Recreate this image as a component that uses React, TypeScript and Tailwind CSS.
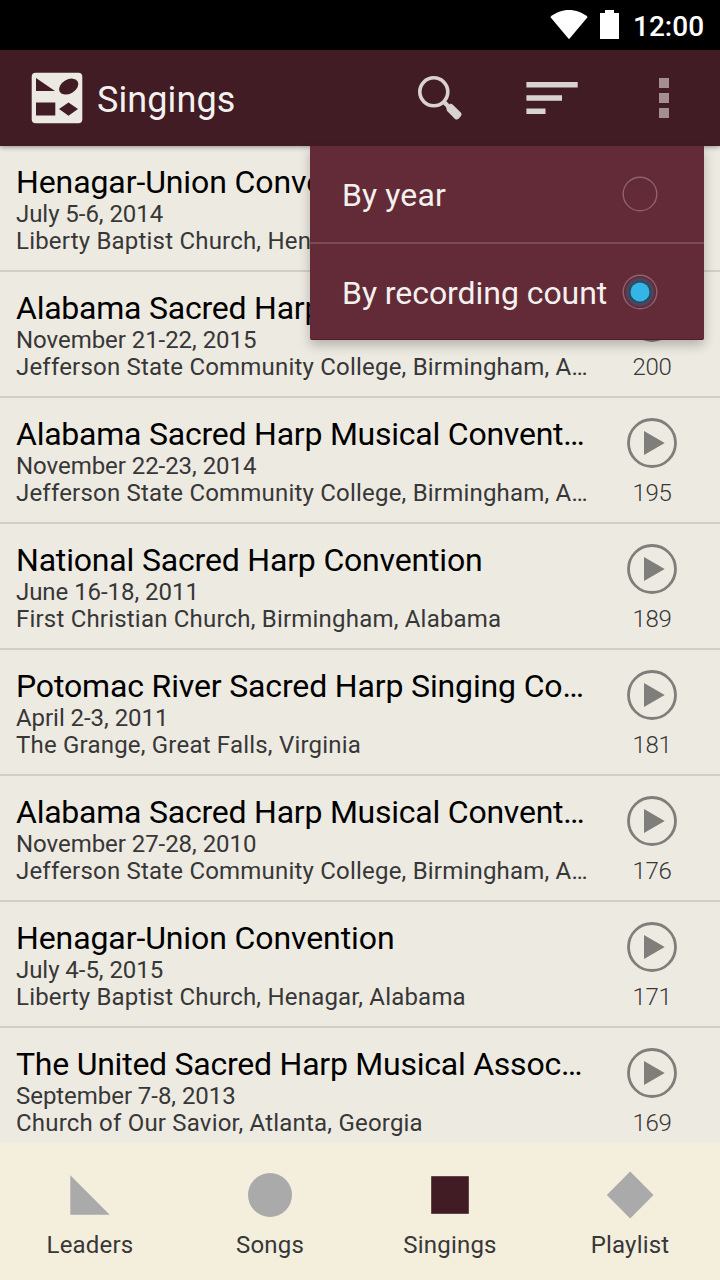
const singings = [
  { title: 'Henagar-Union Convention', tracking: 'tracking-[-0.1px]', date: 'July 5-6, 2014', place: 'Liberty Baptist Church, Henagar, Alabama', count: 207 },
  { title: 'Alabama Sacred Harp Musical Convention', tracking: 'tracking-[-0.23px]', date: 'November 21-22, 2015', place: 'Jefferson State Community College, Birmingham, Alabama', count: 200 },
  { title: 'Alabama Sacred Harp Musical Convention', tracking: 'tracking-[-0.23px]', date: 'November 22-23, 2014', place: 'Jefferson State Community College, Birmingham, Alabama', count: 195 },
  { title: 'National Sacred Harp Convention', tracking: 'tracking-[-0.18px]', date: 'June 16-18, 2011', place: 'First Christian Church, Birmingham, Alabama', count: 189 },
  { title: 'Potomac River Sacred Harp Singing Convention', tracking: 'tracking-[-0.15px]', date: 'April 2-3, 2011', place: 'The Grange, Great Falls, Virginia', count: 181 },
  { title: 'Alabama Sacred Harp Musical Convention', tracking: 'tracking-[-0.23px]', date: 'November 27-28, 2010', place: 'Jefferson State Community College, Birmingham, Alabama', count: 176 },
  { title: 'Henagar-Union Convention', tracking: 'tracking-[-0.1px]', date: 'July 4-5, 2015', place: 'Liberty Baptist Church, Henagar, Alabama', count: 171 },
  { title: 'The United Sacred Harp Musical Association', tracking: 'tracking-[-0.24px]', date: 'September 7-8, 2013', place: 'Church of Our Savior, Atlanta, Georgia', count: 169 },
];

function StatusBar() {
  return (
    <div className="flex h-[50px] shrink-0 items-center bg-black pl-[550px] text-white">
      <svg className="h-[50px] w-[38px] shrink-0" viewBox="0 0 38 50" fill="currentColor">
        <path d="M0.3 17C11 7.8 27 7.8 37.7 17L19 39.3Z" />
      </svg>
      <svg className="ml-3 h-[50px] w-[19px] shrink-0" viewBox="0 0 19 50" fill="currentColor">
        <path d="M0 13H5V10H14V13H19V39H0Z" />
      </svg>
      <span className="ml-[14px] mt-[3px] text-[28px] font-medium leading-8">12:00</span>
    </div>
  );
}

function AppBar() {
  return (
    <header className="relative z-10 flex h-24 shrink-0 items-center bg-[#411c24] pl-[31px] text-[#f3f1ee] shadow-[0_1px_5px_rgba(0,0,0,0.4)]">
      <svg className="h-[52px] w-[52px] shrink-0" viewBox="0 0 52 52">
        <rect x="0.7" y="0.7" width="50.6" height="50.6" rx="4" fill="#ece9e2" />
        <g fill="#411c24">
          <path d="M5 6V19H24Z" />
          <ellipse cx="37.7" cy="14.6" rx="10.4" ry="7" transform="rotate(-30 37.7 14.6)" />
          <rect x="5" y="30.5" width="19.3" height="13" />
          <path d="M37.5 30.5L47 37L37.5 43.7L28 37Z" />
        </g>
      </svg>
      <h1 className="ml-[14px] mt-1 w-[306px] text-[36px] leading-[42px] tracking-[0.1px]">Singings</h1>
      <svg className="h-[96px] w-[60px] shrink-0" viewBox="403 50 60 96">
        <circle cx="433.8" cy="91.8" r="14" fill="none" stroke="#d9d2d3" strokeWidth="3.6" />
        <path d="M443 101L449.5 107.5" stroke="#d9d2d3" strokeWidth="4.5" />
        <path d="M446.2 107.6L450.6 103.6L452.6 104.4L461 112.8Q462.4 114.5 461 116L458.8 118.6Q457 120.3 455 119L446.9 110.8Z" fill="#d9d2d3" />
      </svg>
      <svg className="ml-[63px] h-24 w-[52px] shrink-0" viewBox="526 50 52 96" fill="#d9d2d3">
        <path d="M526.4 82H577.7V87.4H526.4ZM526.4 95.2H562V100.7H526.4ZM526.4 108.5H545.5V114H526.4Z" />
      </svg>
      <svg className="ml-[81px] h-24 w-[10px] shrink-0" viewBox="0 0 10 96" fill="#a38f93">
        <path d="M0 28H10V38H0ZM0 43H10V53H0ZM0 58H10V68H0Z" />
      </svg>
    </header>
  );
}

function Radio({ checked }: { checked?: boolean }) {
  return (
    <svg className="h-10 w-10 shrink-0" viewBox="0 0 40 40">
      <defs>
        <radialGradient id="radio-glow">
          <stop offset="0.6" stopColor="#1d4a68" />
          <stop offset="0.8" stopColor="#4a4960" />
          <stop offset="1" stopColor="#632b38" />
        </radialGradient>
      </defs>
      {checked && <circle cx="20" cy="20" r="15.5" fill="url(#radio-glow)" />}
      <circle cx="20" cy="20" r="16.8" fill="none" stroke="#8d636d" strokeWidth="1.4" />
      {checked && <circle cx="20" cy="20" r="9.5" fill="#33b5e5" />}
    </svg>
  );
}

function SortMenu() {
  return (
    <div className="absolute left-[310px] top-[146px] z-20 flex h-[194px] w-[394px] flex-col rounded-b-[2px] border-b border-[#4a1f29] bg-[#632b38] text-[32px] text-[#f3f1ee] shadow-[0_5px_12px_rgba(0,0,0,0.25)]">
      <div className="flex h-[98px] items-center justify-between border-b-2 border-[#7a4a55] pl-8 pr-11">
        <span className="mt-px tracking-[0.1px]">By year</span>
        <Radio />
      </div>
      <div className="flex flex-1 items-center justify-between pl-8 pr-11">
        <span className="mt-[3px] whitespace-nowrap tracking-[-0.06px]">By recording count</span>
        <Radio checked />
      </div>
    </div>
  );
}

function SingingRow({ title, tracking, date, place, count }: (typeof singings)[number]) {
  return (
    <li className="flex h-[126px] shrink-0 border-b-2 border-[#d2cfc9] pl-4">
      <div className="w-[573px] pt-[17px] text-[24px] leading-[27px] text-[#373737]">
        <div className={'truncate text-[32px] leading-[38px] text-black ' + tracking}>{title}</div>
        <div className="tracking-[-0.05px]">{date}</div>
        <div className="truncate tracking-[0.2px]">{place}</div>
      </div>
      <div className="ml-[23px] flex w-20 flex-col items-center pt-[19px]">
        <svg className="h-[52px] w-[52px]" viewBox="0 0 52 52">
          <circle cx="26" cy="26" r="23.5" fill="none" stroke="#7f7e7a" strokeWidth="2.8" />
          <path d="M18 14V38L38.7 26Z" fill="#7f7e7a" />
        </svg>
        <span className="mt-[10px] text-[24px] font-light leading-[28px] tracking-[-0.3px] text-[#373737]">{count}</span>
      </div>
    </li>
  );
}

const tabs = [
  { label: 'Leaders', shape: <path d="M20.3 25.3V64.7H59.7Z" />, color: 'text-[#aaaaaa]' },
  { label: 'Songs', shape: <circle cx="40" cy="45" r="22" />, color: 'text-[#aaaaaa]' },
  { label: 'Singings', shape: <rect x="21.2" y="26.2" width="37.6" height="37.6" />, color: 'text-[#411c24]' },
  { label: 'Playlist', shape: <path d="M40.2 21.5L63.5 45L40.2 68.5L16.8 45Z" />, color: 'text-[#aaaaaa]' },
];

function BottomTabs() {
  return (
    <nav className="grid h-[137px] shrink-0 grid-cols-4 bg-[#f4eedd]">
      {tabs.map((tab) => (
        <div key={tab.label} className="flex flex-col items-center pt-[7px]">
          <svg className={'h-20 w-20 ' + tab.color} viewBox="0 0 80 80" fill="currentColor">
            {tab.shape}
          </svg>
          <span className="text-[24px] leading-[30px] tracking-[0.2px] text-[#373737]">{tab.label}</span>
        </div>
      ))}
    </nav>
  );
}

export default function App() {
  return (
    <div className="relative flex h-[1280px] w-[720px] flex-col overflow-hidden bg-[#edeae2] font-[Roboto,sans-serif]">
      <StatusBar />
      <AppBar />
      <ul className="flex min-h-0 flex-1 flex-col overflow-hidden">
        {singings.map((s) => (
          <SingingRow key={s.count} {...s} />
        ))}
      </ul>
      <BottomTabs />
      <SortMenu />
    </div>
  );
}
